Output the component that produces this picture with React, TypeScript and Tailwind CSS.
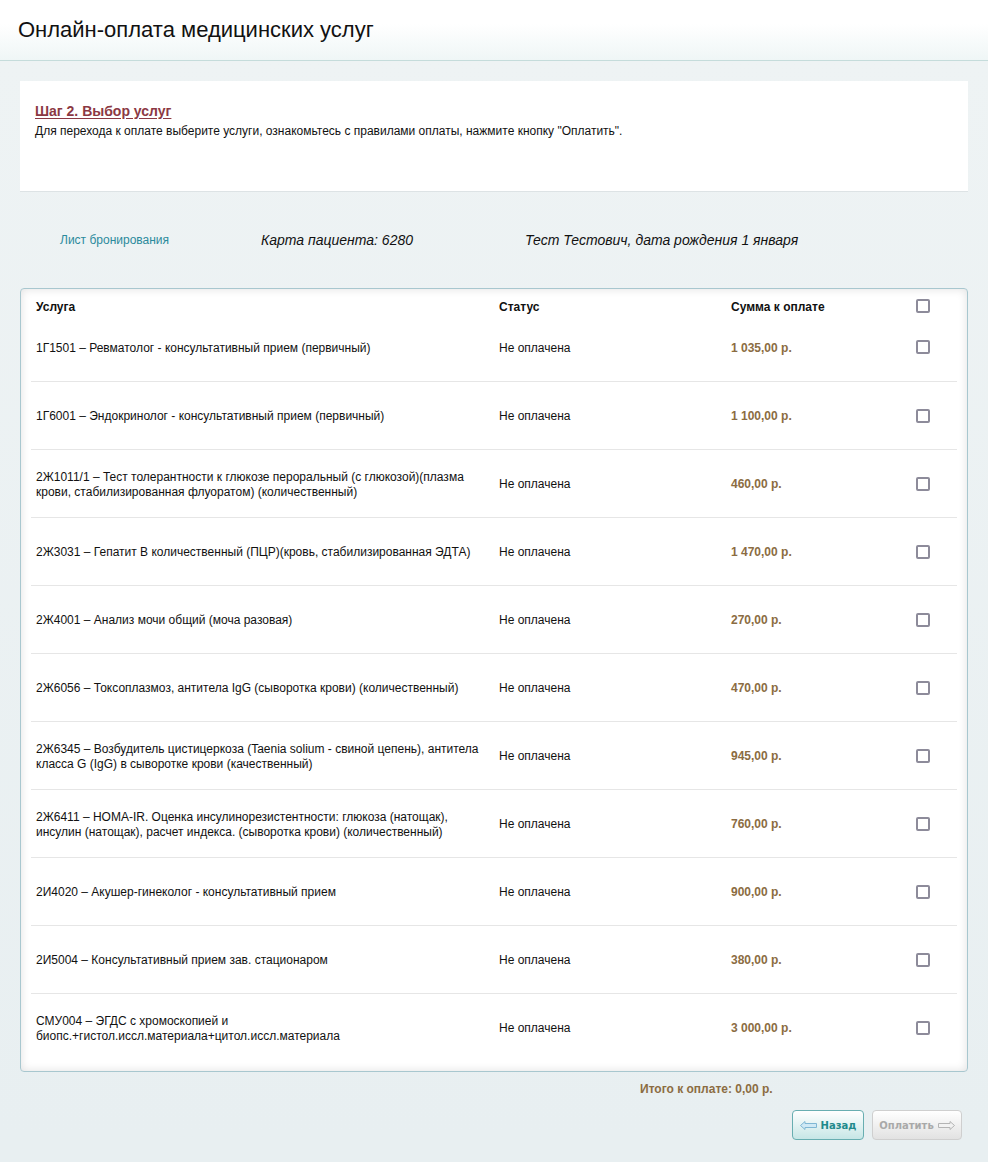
import React from "react";

const rows: { name: string; sum: string }[] = [
  { name: "1Г1501 – Ревматолог - консультативный прием (первичный)", sum: "1 035,00 р." },
  { name: "1Г6001 – Эндокринолог - консультативный прием (первичный)", sum: "1 100,00 р." },
  { name: "2Ж1011/1 – Тест толерантности к глюкозе пероральный (с глюкозой)(плазма крови, стабилизированная флуоратом) (количественный)", sum: "460,00 р." },
  { name: "2Ж3031 – Гепатит В количественный (ПЦР)(кровь, стабилизированная ЭДТА)", sum: "1 470,00 р." },
  { name: "2Ж4001 – Анализ мочи общий (моча разовая)", sum: "270,00 р." },
  { name: "2Ж6056 – Токсоплазмоз, антитела IgG (сыворотка крови) (количественный)", sum: "470,00 р." },
  { name: "2Ж6345 – Возбудитель цистицеркоза (Taenia solium - свиной цепень), антитела класса G (IgG) в сыворотке крови (качественный)", sum: "945,00 р." },
  { name: "2Ж6411 – HOMA-IR. Оценка инсулинорезистентности: глюкоза (натощак), инсулин (натощак), расчет индекса. (сыворотка крови) (количественный)", sum: "760,00 р." },
  { name: "2И4020 – Акушер-гинеколог - консультативный прием", sum: "900,00 р." },
  { name: "2И5004 – Консультативный прием зав. стационаром", sum: "380,00 р." },
  { name: "СМУ004 – ЭГДС с хромоскопией и биопс.+гистол.иссл.материала+цитол.иссл.материала", sum: "3 000,00 р." },
];

function Box() {
  return <div className="w-[14px] h-[14px] border-2 border-[#8d8b9a] rounded-[2px] bg-white" />;
}

function LeftArrow() {
  return (
    <svg width="17" height="9" viewBox="0 0 17 9">
      <path d="M0.5 4.5 L5 0.5 L5 2.5 L16.5 2.5 L16.5 6.5 L5 6.5 L5 8.5 Z" fill="#cfe9f5" stroke="#7fb7d4" strokeWidth="1" />
    </svg>
  );
}

function RightArrow() {
  return (
    <svg width="17" height="9" viewBox="0 0 17 9">
      <path d="M16.5 4.5 L12 0.5 L12 2.5 L0.5 2.5 L0.5 6.5 L12 6.5 L12 8.5 Z" fill="#f2f2f2" stroke="#b4b4b4" strokeWidth="1" />
    </svg>
  );
}

export default function App() {
  return (
    <div
      className="w-[988px] h-[1162px] bg-[#e8eff1] text-[#111] overflow-hidden"
      style={{ fontFamily: '"Liberation Sans", Arial, sans-serif' }}
    >
      <div className="h-[61px] bg-gradient-to-b from-white from-40% to-[#eff6f6] border-b border-[#c5dcdb] flex items-center pl-[18px]">
        <h1 className="text-[22px] leading-[26px] text-[#111] mt-[-1px]">Онлайн-оплата медицинских услуг</h1>
      </div>
      <div className="bg-gradient-to-b from-[#eef3f4] to-[#e8eff1] pt-[20px] px-[20px]">
        <div className="h-[111px] bg-white border-b border-[#dde3e5] pl-[15px] pt-[22px]">
          <div className="text-[14px] leading-[16px] font-bold text-[#8b3843] underline underline-offset-2">Шаг 2. Выбор услуг</div>
          <div className="text-[12px] leading-[14px] mt-[5px] text-[#111]">
            Для перехода к оплате выберите услуги, ознакомьтесь с правилами оплаты, нажмите кнопку "Оплатить".
          </div>
        </div>
        <div className="h-[96px] flex items-center pl-[40px]">
          <div className="w-[201px] text-[12px] text-[#2b8a9c]">Лист бронирования</div>
          <div className="w-[264px] text-[14px] italic">Карта пациента: 6280</div>
          <div className="text-[14px] italic">Тест Тестович, дата рождения 1 января</div>
        </div>
        <div className="bg-white border border-[#a8c7cf] rounded-[4px] shadow-[inset_0_0_10px_rgba(0,0,0,0.12)] px-[10px] pb-[10px]">
          <div className="flex h-[24px] pt-[11px] text-[12px] leading-[14px] font-bold">
            <div className="w-[463px] pl-[5px]">Услуга</div>
            <div className="w-[232px] pl-[5px]">Статус</div>
            <div className="w-[190px] pl-[5px]">Сумма к оплате</div>
            <div className="mt-[-1px]"><Box /></div>
          </div>
          {rows.map((r, i) => (
            <div
              key={i}
              className={"flex items-center h-[68px] pt-[2px] text-[12px] leading-[15px] " + (i > 0 ? "border-t border-[#e6e6e6]" : "")}
            >
              <div className="w-[463px] pl-[5px] pr-[5px]">{r.name}</div>
              <div className="w-[232px] pl-[5px]">Не оплачена</div>
              <div className="w-[190px] pl-[5px] font-bold text-[#8b6c42]">{r.sum}</div>
              <div className="mt-[-2px]"><Box /></div>
            </div>
          ))}
        </div>
        <div className="h-[34px] flex items-center pl-[620px] text-[12px] font-bold text-[#8b6c42]">Итого к оплате: 0,00 р.</div>
        <div className="flex justify-end gap-[8px] pr-[6px] pt-[4px]" style={{ fontFamily: '"DejaVu Sans", Verdana, sans-serif' }}>
          <button className="w-[72px] h-[30px] rounded-[4px] border border-[#68aeb1] bg-gradient-to-b from-white to-[#c6e6e6] flex items-center justify-center gap-[4px] text-[10px] font-bold text-[#1f8a8c]">
            <LeftArrow />
            <span>Назад</span>
          </button>
          <button className="w-[90px] h-[30px] rounded-[4px] border border-[#cfcfcf] bg-gradient-to-b from-white to-[#e2e2e2] flex items-center justify-center gap-[4px] text-[10px] font-bold text-[#a9a9a9]">
            <span>Оплатить</span>
            <RightArrow />
          </button>
        </div>
      </div>
    </div>
  );
}
